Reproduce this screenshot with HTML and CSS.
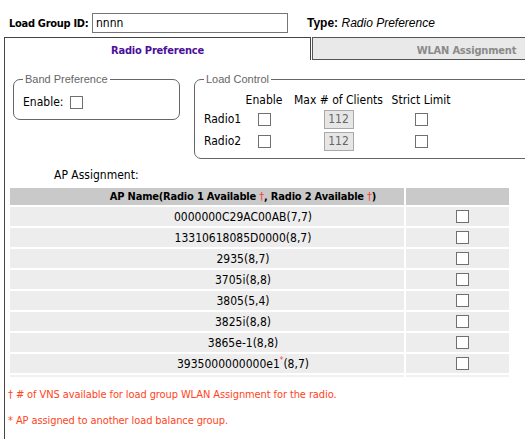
FILE: index.html
```html
<!DOCTYPE html>
<html>
<head>
<meta charset="utf-8">
<link rel="stylesheet" href="styles.css">
</head>
<body>
<div class="top">
  <span class="lg-label">Load Group ID:</span>
  <div class="lg-input">nnnn</div>
  <div class="type"><b>Type:</b> <i>Radio Preference</i></div>
</div>
<div class="panel">
  <div class="tabs">
    <div class="tab active">Radio Preference</div>
    <div class="tab inactive">WLAN Assignment</div>
  </div>
  <div class="content">
    <div class="groups">
      <fieldset class="box band">
        <legend>Band Preference</legend>
        <div class="band-row"><span>Enable:</span><span class="cb"></span></div>
      </fieldset>
      <fieldset class="box load">
        <legend>Load Control</legend>
        <div class="lc-grid">
          <span></span><span class="hd">Enable</span><span class="hd">Max # of Clients</span><span class="hd">Strict Limit</span>
          <span class="rl">Radio1</span><span class="cell"><span class="cb"></span></span><span class="cell"><span class="num">112</span></span><span class="cell"><span class="cb"></span></span>
          <span class="rl">Radio2</span><span class="cell"><span class="cb"></span></span><span class="cell"><span class="num">112</span></span><span class="cell"><span class="cb"></span></span>
        </div>
      </fieldset>
    </div>
    <div class="ap-label">AP Assignment:</div>
    <table class="ap">
      <thead>
        <tr><th class="c1">AP Name(Radio 1 Available <span class="dag">†</span>, Radio 2 Available <span class="dag">†</span>)</th><th class="c2"></th></tr>
      </thead>
      <tbody>
        <tr><td class="c1">0000000C29AC00AB(7,7)</td><td class="c2"><span class="cb"></span></td></tr>
        <tr><td class="c1">13310618085D0000(8,7)</td><td class="c2"><span class="cb"></span></td></tr>
        <tr><td class="c1">2935(8,7)</td><td class="c2"><span class="cb"></span></td></tr>
        <tr><td class="c1">3705i(8,8)</td><td class="c2"><span class="cb"></span></td></tr>
        <tr><td class="c1">3805(5,4)</td><td class="c2"><span class="cb"></span></td></tr>
        <tr><td class="c1">3825i(8,8)</td><td class="c2"><span class="cb"></span></td></tr>
        <tr><td class="c1">3865e-1(8,8)</td><td class="c2"><span class="cb"></span></td></tr>
        <tr><td class="c1">3935000000000e1<sup class="star">*</sup>(8,7)</td><td class="c2"><span class="cb"></span></td></tr>
        <tr class="filler"><td></td><td></td></tr>
      </tbody>
    </table>
    <p class="note">† # of VNS available for load group WLAN Assignment for the radio.</p>
    <p class="note">* AP assigned to another load balance group.</p>
  </div>
</div>
</body>
</html>
```
FILE: styles.css
```css
html, body {
  margin: 0;
  padding: 0;
  overflow: hidden;
}
body {
  width: 525px;
  height: 439px;
  background: #fff;
  color: #000;
  font-family: "DejaVu Sans Condensed", "DejaVu Sans", sans-serif;
  font-size: 12px;
}
.top {
  display: flex;
  align-items: center;
  height: 37px;
  box-sizing: border-box;
  padding: 9px 0 0 9px;
}
.lg-label {
  font-weight: bold;
  font-size: 11px;
  letter-spacing: -0.3px;
  white-space: nowrap;
  flex-shrink: 0;
  width: 83px;
}
.lg-input {
  flex-shrink: 0;
  width: 196px;
  height: 20px;
  box-sizing: border-box;
  border: 1px solid #767676;
  padding-left: 3px;
  line-height: 18px;
}
.type {
  margin-left: 19px;
  white-space: nowrap;
  font-family: "Liberation Sans", Arial, sans-serif;
  font-size: 12px;
}
.panel {
  margin-left: 4px;
  border-left: 1px solid #444;
  width: 520px;
  height: 402px;
  overflow: hidden;
}
.tabs {
  display: flex;
  height: 23px;
}
.tab {
  flex-shrink: 0;
  box-sizing: border-box;
  height: 23px;
  padding-top: 4px;
  line-height: 17px;
  text-align: center;
  font-weight: bold;
  font-size: 11px;
  letter-spacing: -0.2px;
}
.tab.active {
  width: 306px;
  border-top: 1px solid #444;
  border-right: 1px solid #444;
  color: #4b1098;
}
.tab.inactive {
  width: 308px;
  margin-left: 1px;
  border: 1px solid #555;
  border-right: none;
  background: #e9e9e9;
  color: #8a8a8a;
}
.content {
  padding-left: 3px;
}
.groups {
  display: flex;
  align-items: flex-start;
  margin-left: 5px;
  margin-top: 13px;
}
.box {
  flex-shrink: 0;
  margin: 0;
  border: 1px solid #666;
  border-radius: 7px;
  box-sizing: border-box;
}
.box legend {
  font-family: "Liberation Sans", Arial, sans-serif;
  font-size: 11px;
  color: #666;
  padding: 0 2px;
  line-height: 13px;
}
.band {
  width: 167px;
  height: 47px;
  padding: 7px 9px 0 9px;
}
.band-row {
  display: flex;
  align-items: center;
  gap: 7px;
  height: 18px;
}
.load {
  margin-left: 14px;
  width: 400px;
  height: 86px;
  padding: 6px 9px 0 9px;
}
.lc-grid {
  display: grid;
  grid-template-columns: 37px 46px 103px 62px;
  grid-template-rows: 16px 22px 22px;
  align-items: center;
}
.hd {
  text-align: center;
  white-space: nowrap;
}
.cell {
  display: flex;
  justify-content: center;
  align-items: center;
}
.cb {
  display: inline-block;
  width: 13px;
  height: 13px;
  box-sizing: border-box;
  border: 1px solid #707070;
  background: #fff;
}
.num {
  display: inline-block;
  width: 30px;
  height: 19px;
  box-sizing: border-box;
  border: 1px solid #a9a9a9;
  background: #e6e6e6;
  color: #666;
  text-align: center;
  line-height: 17px;
}
.ap-label {
  margin: 9px 0 0 46px;
  line-height: 15px;
}
.ap {
  margin-top: 3px;
  border-spacing: 2px;
  width: 503px;
}
.ap th, .ap td {
  padding: 0;
}
.ap th {
  background: #c9c9c9;
  height: 17px;
  font-weight: bold;
  font-size: 11px;
  letter-spacing: -0.2px;
}
.ap td {
  background: #ededed;
  height: 19px;
  text-align: center;
}
.ap .c1 {
  width: 322px;
  padding-left: 72px;
  text-align: center;
}
.ap td.c2 {
  padding-left: 9px;
  line-height: 0;
}
.ap td.c2 .cb {
  vertical-align: middle;
}
.dag {
  color: #ff3b30;
  font-weight: normal;
}
.star {
  color: #ff3b30;
  font-size: 8px;
  vertical-align: 5px;
  line-height: 0;
}
.ap tr.filler td {
  height: 2px;
  padding: 0;
  background: #f1f1f1;
  font-size: 0;
  line-height: 0;
}
.note {
  margin: 0;
  padding-top: 8px;
  line-height: 15px;
  font-size: 11px;
  letter-spacing: -0.1px;
  color: #ff4422;
}
.note + .note {
  padding-top: 11px;
}
```
